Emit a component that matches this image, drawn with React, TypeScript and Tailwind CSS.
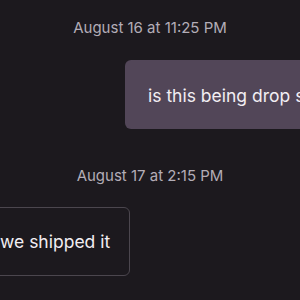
import React from 'react';

const Stamp = ({ text }: { text: string }) => (
  <div className="text-center text-[15px] leading-[20px] text-[#b3adb7]">{text}</div>
);

export default function App() {
  return (
    <div
      className="w-[300px] h-[300px] overflow-hidden bg-[#1c191e] flex flex-col pt-[18px]"
      style={{ fontFamily: 'Inter, "Noto Sans", sans-serif' }}>
      <Stamp text="August 16 at 11:25 PM" />
      <div className="mt-[22px] flex">
        <div className="ml-[125px] shrink-0 h-[69px] w-[260px] rounded-[6px] bg-[#524658] flex items-center pl-[23px] pt-[3px] whitespace-nowrap text-[17.5px] text-[#f2eef3]">
          is this being drop shipped?
        </div>
      </div>
      <div className="mt-[37px]">
        <Stamp text="August 17 at 2:15 PM" />
      </div>
      <div className="mt-[21px] flex">
        <div className="-ml-[21px] shrink-0 h-[69px] w-[151px] rounded-[6px] border border-[#4b464e] flex items-center pl-[20px] pt-[2px] whitespace-nowrap text-[17.5px] text-[#f2eef3]">
          we shipped it
        </div>
      </div>
    </div>
  );
}
